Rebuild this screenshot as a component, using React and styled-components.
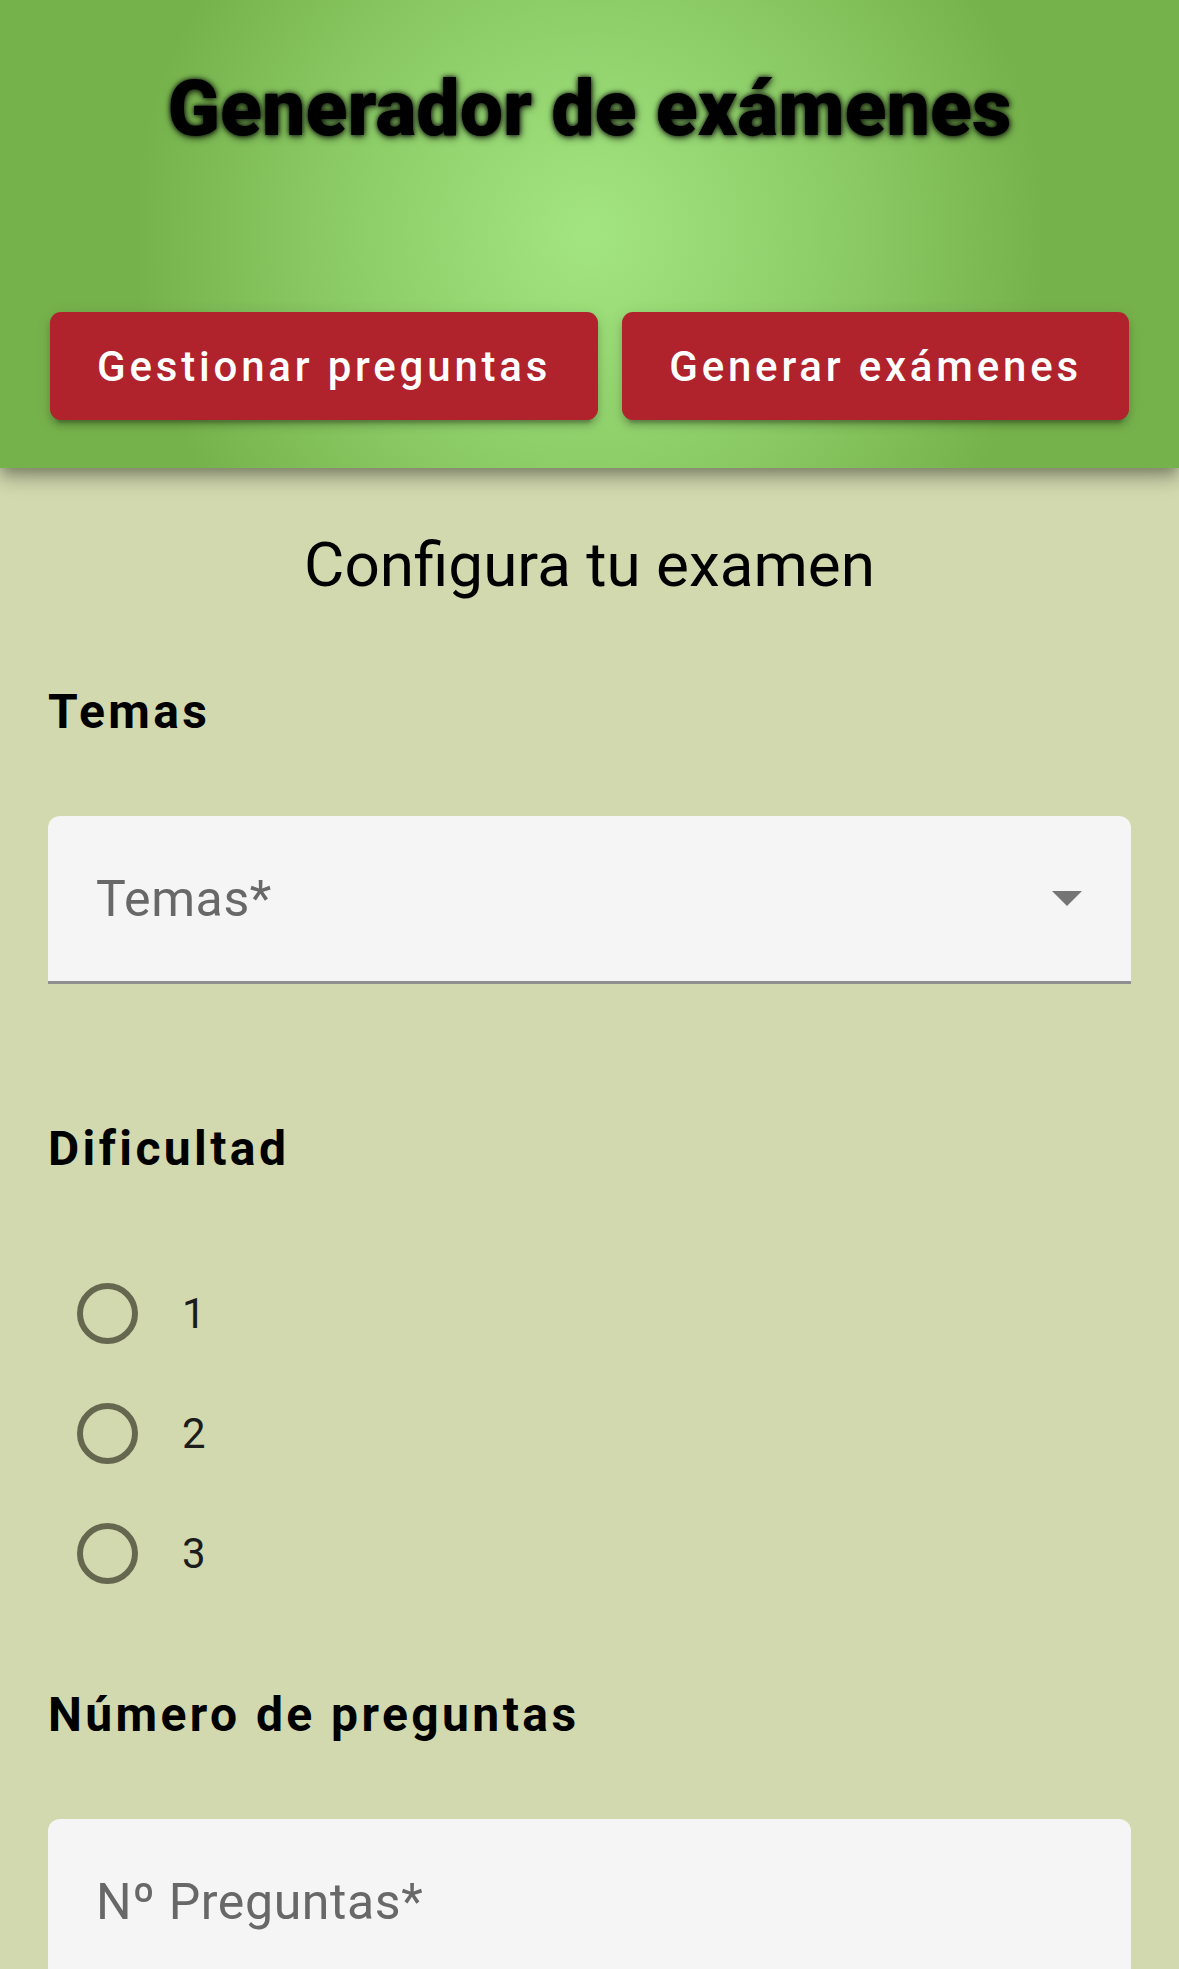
import React from 'react'
import styled, { createGlobalStyle } from 'styled-components'

const GlobalStyle = createGlobalStyle`
  html, body {
    margin: 0;
    padding: 0;
    background: #d2d9af;
    font-family: Roboto, "Liberation Sans", sans-serif;
  }
  * {
    box-sizing: border-box;
  }
`

const difficulties = ['1', '2', '3']

const App = () => {
  return (
    <React.Fragment>
      <GlobalStyle />
      <Page>
        <Header>
          <Title>Generador de exámenes</Title>
          <ButtonRow>
            <NavButton>Gestionar preguntas</NavButton>
            <NavButton>Generar exámenes</NavButton>
          </ButtonRow>
        </Header>

        <Main>
          <FormTitle>Configura tu examen</FormTitle>

          <SectionLabel top={83}>Temas</SectionLabel>
          <Field>
            <Placeholder>Temas*</Placeholder>
            <ArrowIcon viewBox="7 10 10 5">
              <path d="M7 10l5 5 5-5z" />
            </ArrowIcon>
          </Field>

          <SectionLabel top={136}>Dificultad</SectionLabel>
          <RadioGroup>
            {difficulties.map(value => (
              <RadioRow key={value}>
                <RadioCircle />
                <RadioLabel>{value}</RadioLabel>
              </RadioRow>
            ))}
          </RadioGroup>

          <SectionLabel top={73}>Número de preguntas</SectionLabel>
          <Field>
            <Placeholder>Nº Preguntas*</Placeholder>
          </Field>
        </Main>
      </Page>
    </React.Fragment>
  )
}

const Page = styled.div`
  width: 1179px;
  min-height: 1969px;
  background: #d2d9af;
`

const Header = styled.header`
  position: relative;
  z-index: 1;
  display: flex;
  flex-direction: column;
  align-items: center;
  height: 468px;
  padding-top: 67px;
  background: radial-gradient(circle at 50% 50%, #a3e581 0%, #8fcf6a 35%, #76b24c 72%);
  box-shadow: 0 6px 12px -3px rgba(0, 0, 0, 0.25), 0 12px 15px 0 rgba(0, 0, 0, 0.16),
    0 3px 30px 0 rgba(0, 0, 0, 0.14);
`

const Title = styled.h1`
  margin: 0;
  height: 84px;
  line-height: 84px;
  font-family: Roboto, "Liberation Sans", sans-serif;
  font-weight: 900;
  font-size: 77px;
  color: #000;
  text-shadow: 0 0 5px rgba(0, 0, 0, 0.9), 1px 2px 8px rgba(0, 0, 0, 0.6);
`

const ButtonRow = styled.div`
  display: flex;
  justify-content: center;
  gap: 24px;
  margin-top: 161px;
`

const NavButton = styled.button`
  height: 108px;
  padding: 0 47px;
  border: none;
  border-radius: 11px;
  background: #b0222c;
  color: #fff;
  font-family: Roboto, "Liberation Sans", sans-serif;
  font-weight: 500;
  font-size: 42px;
  letter-spacing: 3.8px;
  box-shadow: 0 9px 3px -6px rgba(0, 0, 0, 0.2), 0 6px 6px 0 rgba(0, 0, 0, 0.14),
    0 3px 15px 0 rgba(0, 0, 0, 0.12);
`

const Main = styled.main`
  display: flex;
  flex-direction: column;
  padding: 62px 48px 0 48px;
`

const FormTitle = styled.h2`
  margin: 0;
  height: 70px;
  line-height: 70px;
  text-align: center;
  font-weight: 400;
  font-size: 62px;
  color: #000;
`

const SectionLabel = styled.h3`
  margin: ${props => props.top}px 0 0 0;
  height: 58px;
  line-height: 58px;
  font-weight: 700;
  font-size: 48px;
  letter-spacing: 3.4px;
  color: #000;
`

const Field = styled.div`
  display: flex;
  align-items: center;
  justify-content: space-between;
  height: 168px;
  margin-top: 75px;
  padding: 0 48px;
  background: #f5f5f5;
  border-radius: 12px 12px 0 0;
  border-bottom: 3px solid #8f8f8f;
`

const Placeholder = styled.span`
  font-size: 50px;
  letter-spacing: 0.6px;
  color: #686868;
`

const ArrowIcon = styled.svg`
  width: 30px;
  height: 15px;
  margin-right: 1px;
  fill: #757575;
`

const RadioGroup = styled.div`
  display: flex;
  flex-direction: column;
  margin-top: 75px;
  padding-left: 29px;
`

const RadioRow = styled.label`
  display: flex;
  align-items: center;
  height: 120px;
`

const RadioCircle = styled.span`
  width: 61px;
  height: 61px;
  border: 6px solid #65684f;
  border-radius: 50%;
`

const RadioLabel = styled.span`
  margin-left: 44px;
  font-size: 42px;
  color: #1c1c1c;
`

export default App
